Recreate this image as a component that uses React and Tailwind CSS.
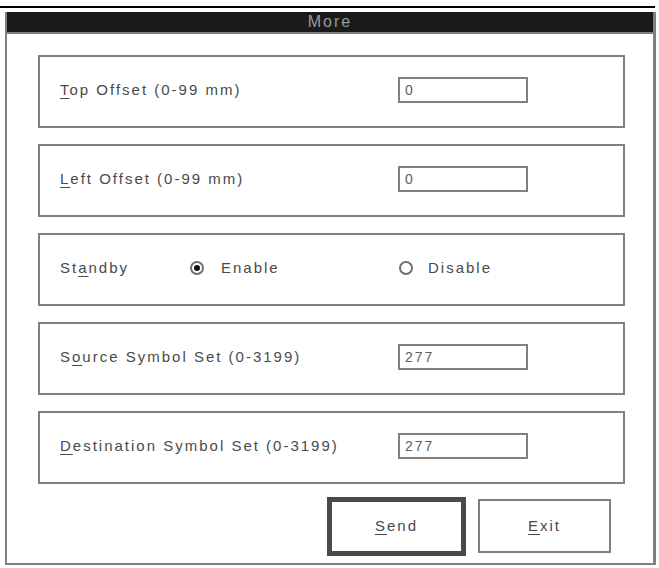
import React from "react";

const font = { fontFamily: '"Liberation Sans", Arial, sans-serif' };

const Label = ({ before, u, after }) => (
	<span className="text-[15px] tracking-[2px] text-[#4a4a4a] whitespace-nowrap">
		{before}
		<span className="underline underline-offset-[3px]">{u}</span>
		{after}
	</span>
);

const Field = ({ value }) => (
	<div className="w-[130px] h-[26px] border-2 border-[#808080] flex items-center pl-[5px] text-[14px] tracking-[2px] text-[#606060]">
		{value}
	</div>
);

const Panel = ({ children }) => (
	<div className="h-[73px] border-2 border-[#808080] flex items-center pl-[20px] pb-[3px]">
		{children}
	</div>
);

const Radio = ({ checked }) => (
	<svg width="16" height="16" viewBox="0 0 16 16">
		<circle cx="8" cy="8" r="6" fill="white" stroke="#707070" strokeWidth="2" />
		{checked && <circle cx="8" cy="8" r="3" fill="#111" />}
	</svg>
);

export default function App() {
	return (
		<div className="w-[659px] h-[568px] bg-white overflow-hidden" style={font}>
			<div className="h-[2px] w-[655px] bg-black mt-[6px]" />
			<div className="ml-[5px] mt-[4px] w-[651px] h-[553px] border-l-2 border-r-[3px] border-b-2 border-[#808080] flex flex-col">
				<div className="h-[22px] bg-[#1a1a1a] border-b-2 border-[#808080] flex items-center justify-center">
					<span className="text-[16px] tracking-[2px] text-[#9a9a9a] leading-none">More</span>
				</div>

				<div className="ml-[31px] w-[587px] mt-[21px] flex flex-col gap-[16px]">
					<Panel>
						<div className="w-[338px]">
							<Label u="T" after="op Offset (0-99 mm)" />
						</div>
						<Field value="0" />
					</Panel>
					<Panel>
						<div className="w-[338px]">
							<Label u="L" after="eft Offset (0-99 mm)" />
						</div>
						<Field value="0" />
					</Panel>
					<Panel>
						<div className="w-[129px]">
							<Label before="St" u="a" after="ndby" />
						</div>
						<div className="w-[209px] flex items-center gap-[16px]">
							<Radio checked />
							<Label u="" after="Enable" />
						</div>
						<div className="flex items-center gap-[14px]">
							<Radio />
							<Label u="" after="Disable" />
						</div>
					</Panel>
					<Panel>
						<div className="w-[338px]">
							<Label before="S" u="o" after="urce Symbol Set (0-3199)" />
						</div>
						<Field value="277" />
					</Panel>
					<Panel>
						<div className="w-[338px]">
							<Label u="D" after="estination Symbol Set (0-3199)" />
						</div>
						<Field value="277" />
					</Panel>
				</div>

				<div className="ml-[320px] mt-[13px] flex items-start gap-[12px]">
					<button className="w-[139px] h-[59px] border-[5px] border-[#4a4a4a] bg-white flex items-center justify-center">
						<Label u="S" after="end" />
					</button>
					<button className="mt-[2px] w-[133px] h-[54px] border-2 border-[#808080] bg-white flex items-center justify-center">
						<Label u="E" after="xit" />
					</button>
				</div>
			</div>
		</div>
	);
}
